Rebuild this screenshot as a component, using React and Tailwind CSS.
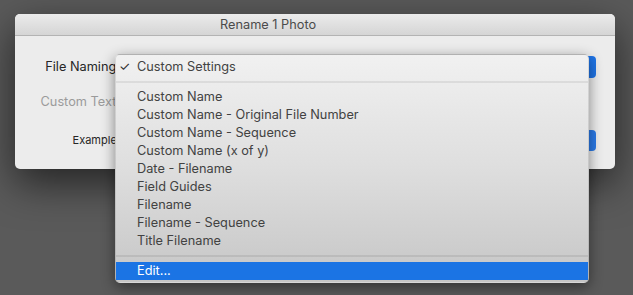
const items = [
  'Custom Name',
  'Custom Name - Original File Number',
  'Custom Name - Sequence',
  'Custom Name (x of y)',
  'Date - Filename',
  'Field Guides',
  'Filename',
  'Filename - Sequence',
  'Title Filename',
];

const font = { fontFamily: 'Inter, "Noto Sans", sans-serif' };

export default function App() {
  return (
    <div className="w-[633px] h-[295px] overflow-hidden bg-[#5a5a5a] pt-[14px] pl-[15px]" style={font}>
      {/* Dialog window */}
      <div className="relative w-[600px] h-[155px] rounded-[5px] bg-[#ececec] shadow-[0_14px_40px_rgba(0,0,0,0.6)]">
        <div className="h-[22px] rounded-t-[5px] border-b border-[#b3b3b3] bg-gradient-to-b from-[#ebebeb] to-[#d5d5d5] flex items-center">
          <span className="text-[12.75px] text-[#4b4b4b] pl-[205px]">Rename 1 Photo</span>
        </div>

        <div className="grid grid-cols-[105px_1fr] items-center pr-[19px] text-[12.75px]">
          <div className="h-[22px] mt-[20px] flex items-center justify-end text-[#262626]">File Naming:</div>
          <div className="h-[22px] mt-[20px] ml-[8px] flex rounded-[4px] bg-white">
            <div className="flex-1" />
            <div className="w-[18px] rounded-r-[4px] bg-[#1f74e6]" />
          </div>

          <div className="h-[22px] mt-[13px] flex items-center justify-end text-[#9b9b9b] pl-[20px]">Custom Text:</div>
          <div className="h-[22px] mt-[13px] ml-[8px] mr-[10px] bg-white" />

          <div className="h-[21px] mt-[17px] flex items-center justify-end text-[11px] text-[#262626]">Example:</div>
          <div className="h-[21px] mt-[17px] ml-[8px] flex">
            <div className="flex-1" />
            <div className="w-[18px] rounded-[4px] bg-[#2a7ae8]" />
          </div>
        </div>

        {/* Popup menu */}
        <div className="absolute left-[100px] top-[40px] w-[474px] h-[229px] rounded-[5px] pt-[3px] pb-[3px] bg-gradient-to-b from-[#f1f1f1] via-[#dedede] to-[#c6c6c6] shadow-[0_4px_14px_rgba(0,0,0,0.45)] border border-black/10 text-[12.75px] text-[#424242]">
          <div className="h-[18px] flex items-center">
            <span className="w-[21px] pl-[3px] text-[#2c2c2c]">✓</span>
            <span>Custom Settings</span>
          </div>
          <div className="h-[12px] flex items-center">
            <div className="w-full h-[2px] bg-black/[0.07]" />
          </div>
          {items.map((it) => (
            <div key={it} className="h-[18px] flex items-center pl-[21px]">{it}</div>
          ))}
          <div className="h-[12px] flex items-center">
            <div className="w-full h-[2px] bg-black/[0.08]" />
          </div>
          <div className="h-[18px] flex items-center pl-[21px] bg-[#1b74e4] text-white">Edit...</div>
        </div>
      </div>
    </div>
  );
}
